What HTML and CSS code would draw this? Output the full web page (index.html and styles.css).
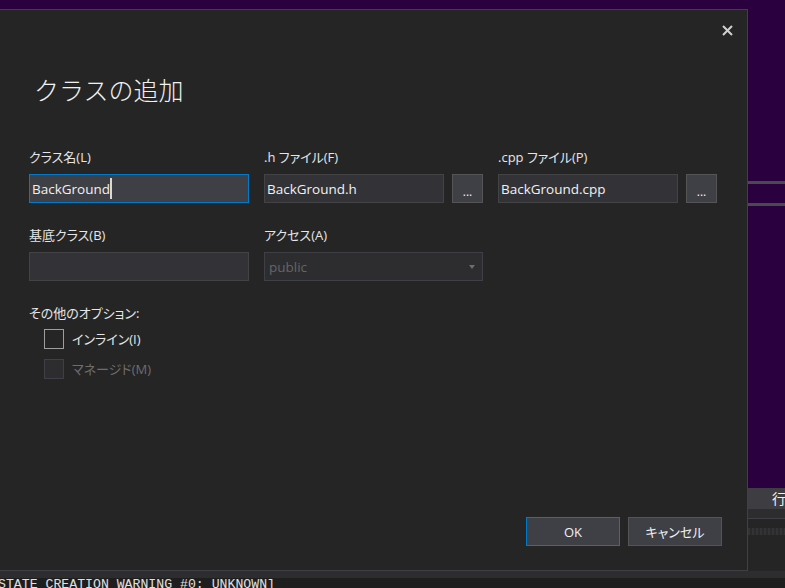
FILE: index.html
```html
<!DOCTYPE html>
<html lang="ja">
<head>
<meta charset="utf-8">
<title>クラスの追加</title>
<link rel="stylesheet" href="styles.css">
</head>
<body>
<div class="screen">
  <div class="top-strip"></div>
  <div class="middle">
    <div class="dialog">
      <div class="dialog-head">
        <button class="close" aria-label="閉じる">
          <svg width="11" height="11" viewBox="0 0 11 11"><path d="M1 1L10 10M10 1L1 10" stroke="#d0d0d0" stroke-width="2"/></svg>
        </button>
      </div>
      <h1 class="title">クラスの追加</h1>
      <div class="form">
        <div class="field">
          <div class="label">クラス名(L)</div>
          <div class="input active"><span class="value">BackGround</span><span class="caret"></span></div>
        </div>
        <div class="field">
          <div class="label">.h ファイル(F)</div>
          <div class="with-btn">
            <div class="input"><span class="value">BackGround.h</span></div>
            <button class="browse">...</button>
          </div>
        </div>
        <div class="field">
          <div class="label">.cpp ファイル(P)</div>
          <div class="with-btn">
            <div class="input"><span class="value">BackGround.cpp</span></div>
            <button class="browse">...</button>
          </div>
        </div>
        <div class="field">
          <div class="label">基底クラス(B)</div>
          <div class="input"></div>
        </div>
        <div class="field">
          <div class="label">アクセス(A)</div>
          <div class="select"><span class="value">public</span><span class="arrow"></span></div>
        </div>
      </div>
      <div class="options">
        <div class="label">その他のオプション:</div>
        <div class="checks">
          <div class="check"><span class="box"></span><span class="check-label">インライン(I)</span></div>
          <div class="check disabled"><span class="box"></span><span class="check-label">マネージド(M)</span></div>
        </div>
      </div>
      <div class="footer">
        <button class="btn primary">OK</button>
        <button class="btn">キャンセル</button>
      </div>
    </div>
    <div class="side">
      <div class="side-purple a"></div>
      <div class="side-bar"></div>
      <div class="side-purple b"></div>
      <div class="side-bar"></div>
      <div class="side-purple c"></div>
      <div class="side-tab">行</div>
      <div class="side-dark"></div>
      <div class="side-panel"><div class="dots"></div></div>
    </div>
  </div>
  <div class="status-strip"></div>
  <div class="console">STATE CREATION WARNING #0: UNKNOWN]</div>
</div>
</body>
</html>
```

FILE: styles.css
```css
* { box-sizing: border-box; }
html, body { margin: 0; padding: 0; }
body {
  background: #2a003f;
  font-family: "Open Sans", "Noto Sans CJK JP", sans-serif;
  color: #f1f1f1;
}
.screen {
  width: 785px;
  height: 588px;
  overflow: hidden;
  display: flex;
  flex-direction: column;
  background: #2a003f;
}
.top-strip { height: 9px; flex: none; }
.middle { display: flex; height: 562px; flex: none; }

.dialog {
  width: 748px;
  height: 562px;
  flex: none;
  background: #252526;
  border: 1px solid #3f3f46;
  border-left: 0;
  display: flex;
  flex-direction: column;
}
.dialog-head {
  display: flex;
  justify-content: flex-end;
  padding: 15px 14px 0 0;
  height: 26px;
}
.close {
  width: 11px;
  height: 11px;
  padding: 0;
  border: 0;
  background: none;
  display: block;
}
.close svg { display: block; }

.title {
  margin: 39px 0 0 0;
  padding-left: 34px;
  font-family: "Noto Sans CJK JP", sans-serif;
  font-size: 25px;
  line-height: 29px;
  font-weight: 300;
  color: #f1f1f1;
}

.label {
  font-size: 13px;
  line-height: 18px;
  height: 18px;
  color: #e6e6e6;
  font-feature-settings: "palt";
  white-space: nowrap;
}

.form {
  margin-top: 44px;
  padding-left: 29px;
  display: grid;
  grid-template-columns: 220px 219px 219px;
  column-gap: 15px;
  row-gap: 23px;
}
.field { display: flex; flex-direction: column; gap: 8px; }

.input, .select {
  height: 29px;
  background: #333337;
  border: 1px solid #434346;
  display: flex;
  align-items: center;
  padding-left: 2px;
  font-size: 13.5px;
  color: #f1f1f1;
}
.input.active { background: #3f3f46; border-color: #007acc; }
.caret {
  width: 2px;
  height: 21px;
  background: #d8d8d8;
  margin-left: 0;
}
.with-btn { display: flex; gap: 8px; }
.with-btn .input { flex: 1; }
.browse {
  width: 31px;
  height: 29px;
  flex: none;
  background: #3f3f46;
  border: 1px solid #555555;
  color: #f1f1f1;
  font-family: "Open Sans", sans-serif;
  font-size: 12px;
  padding: 7px 0 0 0;
  line-height: 1;
}
.select {
  background: #2d2d30;
  border-color: #3f3f46;
  color: #656565;
  padding-left: 4px;
  justify-content: space-between;
}
.arrow {
  width: 0;
  height: 0;
  border-left: 3.5px solid transparent;
  border-right: 3.5px solid transparent;
  border-top: 4px solid #6d6d6d;
  margin-right: 7px;
}

.options { margin-top: 23px; padding-left: 29px; }
.checks {
  margin-top: 7px;
  padding-left: 15px;
  display: flex;
  flex-direction: column;
  gap: 10px;
}
.check { display: flex; align-items: center; gap: 8px; height: 20px; }
.box {
  width: 20px;
  height: 20px;
  border: 1px solid #9e9e9e;
  background: transparent;
}
.check-label {
  font-size: 13px;
  line-height: 18px;
  color: #e6e6e6;
  font-feature-settings: "palt";
}
.check.disabled .box { border-color: #3f3f46; background: #2d2d30; }
.check.disabled .check-label { color: #6d6d6d; }

.footer {
  margin-top: auto;
  display: flex;
  justify-content: flex-end;
  gap: 8px;
  padding: 0 25px 24px 0;
}
.btn {
  width: 94px;
  height: 29px;
  background: #3f3f46;
  border: 1px solid #555555;
  color: #f1f1f1;
  font-family: "Open Sans", "Noto Sans CJK JP", sans-serif;
  font-size: 13px;
  font-feature-settings: "palt";
  padding: 0;
}
.btn.primary { border-color: #007acc; }

.side {
  flex: 1;
  display: flex;
  flex-direction: column;
}
.side-purple.a { height: 172px; }
.side-purple.b { height: 19px; }
.side-purple.c { height: 282px; }
.side-bar { height: 3px; background: #4a4a4e; }
.side-tab {
  height: 21px;
  background: #3e3e42;
  color: #f1f1f1;
  font-family: "Noto Sans CJK JP", sans-serif;
  font-size: 14px;
  line-height: 21px;
  padding-left: 24px;
  white-space: nowrap;
  overflow: hidden;
}
.side-dark { height: 9px; background: #2d2d30; border-bottom: 1px solid #3f3f46; box-sizing: content-box; }
.side-panel { flex: 1; background: #252526; padding-top: 9px; }
.dots {
  height: 7px;
  background-image: repeating-linear-gradient(90deg, #333336 0 2px, #2a2a2c 2px 4px);
}

.status-strip { height: 7px; flex: none; background: #2d2d30; }
.console {
  height: 10px;
  flex: none;
  background: #1e1e1e;
  color: #e0e0e0;
  font-family: "Liberation Mono", monospace;
  font-size: 13.2px;
  line-height: 13px;
  margin-left: -2px;
  white-space: nowrap;
  overflow: hidden;
}
```
